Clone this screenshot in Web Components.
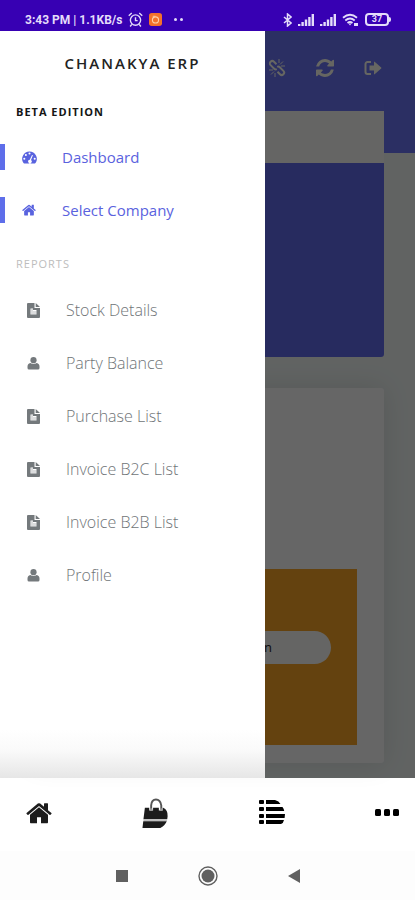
<!DOCTYPE html>
<html lang="en">
<head>
<meta charset="utf-8">
<meta name="viewport" content="width=device-width, initial-scale=1">
<title>Chanakya ERP</title>
<style>
  html, body { margin: 0; height: 100%; }
  body { font-family: "Open Sans", Lato, sans-serif; background: #fff; }
</style>
</head>
<body>
<erp-app></erp-app>
<script>
const FA_HOME = '<path d="M1472 992v480q0 26-19 45t-45 19h-384v-384h-256v384h-384q-26 0-45-19t-19-45v-480q0-1 .5-3t.5-3l575-474 575 474q1 2 1 6zm223-69l-62 74q-8 9-21 11h-3q-13 0-21-7l-692-577-692 577q-12 8-24 7-13-2-21-11l-62-74q-8-10-7-23.5t11-21.5l719-599q32-26 76-26t76 26l244 204v-195q0-14 9-23t23-9h192q14 0 23 9t9 23v408l219 182q10 8 11 21.5t-7 23.5z"/>';
const ICONS = {
  home: ['64 180 1664 1400', FA_HOME],
  refresh: ['128 128 1536 1536', '<path d="M1639 1056q0 5-1 7-64 268-268 434.5t-478 166.5q-146 0-282.5-55t-243.5-157l-129 129q-19 19-45 19t-45-19-19-45v-448q0-26 19-45t45-19h448q26 0 45 19t19 45-19 45l-137 137q71 66 161 102t187 36q134 0 250-65t186-179q11-17 53-117 8-23 30-23h192q13 0 22.5 9.5t9.5 22.5zm25-800v448q0 26-19 45t-45 19h-448q-26 0-45-19t-19-45 19-45l138-138q-148-137-349-137-134 0-250 65t-186 179q-11 17-53 117-8 23-30 23h-199q-13 0-22.5-9.5t-9.5-22.5v-7q65-268 270-434.5t480-166.5q146 0 284 55.5t245 156.5l130-129q19-19 45-19t45 19 19 45z"/>'],
  unlink: ['0 0 18 18', '<g fill="none" stroke="currentColor" stroke-width="2" stroke-linejoin="round"><path d="M8.5 5.2 6 2.7a2.4 2.4 0 0 0-3.4 3.4l3.6 3.6a2.4 2.4 0 0 0 2.6.5"/><path d="M9.5 12.8l2.5 2.5a2.4 2.4 0 0 0 3.4-3.4l-3.6-3.6a2.4 2.4 0 0 0-2.6-.5"/></g><path d="M12 5.5 15 2.500M13 7h4M11 4V0M6 12.500l-3 3M5 11H1M7 14v4" stroke="currentColor" stroke-width="1"/>'],
  signout: ['0 0 18 16', '<path d="M7 2H3.500A2 2 0 0 0 1.500 4v8a2 2 0 0 0 2 2H7" fill="none" stroke="currentColor" stroke-width="2"/><path d="M5.500 5.500H10V2.200q0-1 .9-.3l6.300 5.600q.5.500 0 1l-6.300 5.600q-.9.700-.9-.3v-3.300H5.500z"/>'],
  gauge: ['0 0 16 14', '<path fill-rule="evenodd" d="M8 .5a8 8 0 0 0-6.500 12.500q.3.500.8.500h11.400q.5 0 .8-.5A8 8 0 0 0 8 .5zM8 1.700a1.100 1.100 0 1 1 0 2.200 1.100 1.100 0 0 1 0-2.200zM4.100 3.300a1.100 1.100 0 1 1 0 2.200 1.100 1.100 0 0 1 0-2.200zM2.400 7.300a1.100 1.100 0 1 1 0 2.200 1.100 1.100 0 0 1 0-2.200zM13.600 7.300a1.100 1.100 0 1 1 0 2.200 1.100 1.100 0 0 1 0-2.200zM10.700 4.200l1 .4-2.100 5.200a1.900 1.900 0 1 1-1.300-.4z"/>'],
  file: ['0 0 13 15', '<path fill-rule="evenodd" d="M0 1q0-1 1-1h6.500v5H13v9q0 1-1 1H1q-1 0-1-1zM3.500 5.500v6h6V7H6V5.500z"/><path d="M8.700 0 13 4H8.700z"/><path d="M4 6h2v2h3.500v3.500H4z" opacity=".25"/>'],
  user: ['0 0 12 13', '<circle cx="6" cy="3.200" r="3.100"/><path d="M0 11V9.500Q0 6.500 2.800 6q3.200 1.800 6.400 0Q12 6.500 12 9.500V11q0 1.500-1.500 1.500h-9Q0 12.500 0 11z"/>'],
  bag: ['0 0 27 31', '<path d="M3 10h19q5 2 4.600 9l-.4 3H1.500zM1.300 24h24.400q-2 5-6.700 7H.5z"/><path d="M9.500 13V7.500Q10 1.500 14.500 1.500T19.500 7.500V13" fill="none" stroke="#fff" stroke-width="4"/><path d="M9.500 12V7.500Q10 1.500 14.500 1.500T20 7.500V12" fill="none" stroke="#555" stroke-width="2"/><circle cx="9.500" cy="12" r="1.500" fill="#999"/><circle cx="20" cy="12" r="1.500" fill="#999"/><path d="M1.500 23h24.500" stroke="#bbb" stroke-width="1.500"/>'],
  list: ['0 0 26 25', '<rect y="0" x="0" width="5" height="4" rx="1"/><rect y="7" width="5" height="4" rx="1"/><rect y="14" width="5" height="4" rx="1"/><rect y="20" width="5" height="4" rx="1"/><path d="M7 0h9q4 1 5.500 4H7zM7 7h16.500q1.500 2 1.700 4H7zM7 14h19l-.4 4H7zM7 20h18q-.5 3-3 4H7z"/>'],
  more: ['0 0 24 7', '<rect width="6" height="7" rx="1.500"/><rect x="9" width="6" height="7" rx="1.500"/><rect x="18" width="6" height="7" rx="1.500"/>'],
  alarm: ['0 0 14 14', '<g fill="none" stroke="currentColor" stroke-width="1.300"><circle cx="7" cy="7.500" r="4.800"/><path d="M.7 3.500 3.500 1M13.300 3.500 10.500 1M7 5v3h2M3.500 11.500 2 13.500M10.500 11.500l1.500 2"/></g>'],
  app: ['0 0 14 14', '<rect width="14" height="14" rx="3" fill="#f4712b"/><circle cx="7" cy="7.500" r="3.300" fill="none" stroke="#ffd0a8" stroke-width="1.200"/><path d="M4 3.500h3" stroke="#ffd0a8"/>'],
  bluetooth: ['0 0 9 14', '<path d="M1 4l7 6-3.500 3V1L8 4l-7 6" fill="none" stroke="currentColor" stroke-width="1.500"/>'],
  signal: ['0 0 16 12', '<path d="M0 10h2.400v2H0zM3.400 8h2.400v4H3.400zM6.800 5.500h2.400V12H6.800zM10.200 3h2.400v9h-2.400zM13.600 0H16v12h-2.400z"/>'],
  wifi: ['0 0 17 14', '<g fill="none" stroke="currentColor" stroke-width="1.800"><path d="M1 4.800q7-6 14 0M3.300 7.500q4.700-4 9.400 0M5.500 10q2.500-2 5 0"/></g><path d="M6.500 10.500h3L8 12.500zM12 10h4v3h-4z"/>'],
  square: ['0 0 12 12', '<rect width="12" height="12"/>'],
  circle: ['0 0 20 20', '<circle cx="10" cy="10" r="9" fill="none" stroke="currentColor" stroke-width="1.400"/><circle cx="10" cy="10" r="6.500"/>'],
  back: ['0 0 12 14', '<path d="M12 0v14L0 7z"/>']
};

function define(name, html, setup) {
  const template = document.createElement('template');
  template.innerHTML = html;
  customElements.define(name, class extends HTMLElement {
    connectedCallback() {
      if (this.shadowRoot) return;
      this.attachShadow({ mode: 'open' }).append(template.content.cloneNode(true));
      if (setup) setup(this, this.shadowRoot);
    }
  });
}

define('erp-icon', `
  <style>
    :host { display: inline-flex; flex: none; }
    svg { display: block; fill: currentColor; }
  </style>
  <svg aria-hidden="true"></svg>`, (el, root) => {
  const [box, body] = ICONS[el.getAttribute('name')];
  const svg = root.querySelector('svg');
  svg.setAttribute('viewBox', box);
  svg.setAttribute('width', el.getAttribute('w'));
  svg.setAttribute('height', el.getAttribute('h'));
  svg.innerHTML = body;
});

define('status-bar', `
  <style>
    :host { display: flex; justify-content: space-between; align-items: center; box-sizing: border-box;
      height: 31px; padding: 8px 25px 0; background: #3700b3; color: #e4dcfa;
      font: 700 12px/16px Roboto, sans-serif; }
    div { display: flex; align-items: center; gap: 6px; white-space: nowrap; }
    .dots { display: flex; gap: 3px; margin-left: 6px; }
    .dots i { width: 3px; height: 3px; border-radius: 50%; background: currentColor; }
    .battery { position: relative; box-sizing: border-box; width: 24px; height: 13px; border: 2px solid currentColor;
      border-radius: 4px; font-size: 9px; line-height: 9px; text-align: center; display: block; margin-right: 1px; }
    .battery::after { content: ""; position: absolute; right: -4px; top: 2px; width: 2px; height: 5px;
      border-radius: 0 2px 2px 0; background: currentColor; }
  </style>
  <div><span>3:43 PM | 1.1KB/s</span><erp-icon name="alarm" w="15" h="15"></erp-icon>
    <erp-icon name="app" w="13" h="13"></erp-icon><span class="dots"><i></i><i></i></span></div>
  <div><erp-icon name="bluetooth" w="9" h="14"></erp-icon><erp-icon name="signal" w="16" h="12"></erp-icon>
    <erp-icon name="signal" w="16" h="12"></erp-icon><erp-icon name="wifi" w="17" h="14"></erp-icon>
    <span class="battery">37</span></div>`);

define('drawer-link', `
  <style>
    :host { display: block; }
    a { display: flex; align-items: center; box-sizing: border-box; height: 26px; padding-left: 27px;
      color: #6f7477; text-decoration: none; font-size: 16px; line-height: 20px; font-weight: 300; }
    .icon { width: 39px; display: flex; color: #74797c; }
    :host([active]) a { color: #5a62de; border-left: 5px solid #5e6eea; padding-left: 17px; font-weight: 400; font-size: 15px; }
    :host([active]) .icon { width: 40px; color: #5963df; }
    slot { display: block; }
  </style>
  <a href="#"><span class="icon"></span><slot></slot></a>`, (el, root) => {
  const icon = document.createElement('erp-icon');
  for (const key of ['w', 'h']) icon.setAttribute(key, el.getAttribute(key));
  icon.setAttribute('name', el.getAttribute('icon'));
  root.querySelector('.icon').append(icon);
});

define('side-drawer', `
  <style>
    :host { display: flex; flex-direction: column; box-sizing: border-box; width: 265px; max-width: 85%;
      background: linear-gradient(to top, #e6e6e6, #fafafa 28px, #fff 48px); }
    h1 { margin: 22px 0 0; font-size: 15px; line-height: 20px; font-weight: 600; letter-spacing: 2px;
      text-align: center; color: #222; }
    h2 { margin: 0 16px; font-size: 11px; line-height: 16px; font-weight: 700; letter-spacing: 1px; }
    .beta { margin-top: 31px; color: #151515; }
    .reports { color: #bdbdbd; font-weight: 400; }
    nav { display: flex; flex-direction: column; gap: 27px; }
    .top { padding: 24px 0 33px; }
    .list { padding-top: 25px; }
  </style>
  <h1>CHANAKYA ERP</h1>
  <h2 class="beta">BETA EDITION</h2>
  <nav class="top">
    <drawer-link active icon="gauge" w="15" h="13">Dashboard</drawer-link>
    <drawer-link active icon="home" w="14" h="12">Select Company</drawer-link>
  </nav>
  <h2 class="reports">REPORTS</h2>
  <nav class="list">
    <drawer-link icon="file" w="13" h="15">Stock Details</drawer-link>
    <drawer-link icon="user" w="13" h="13">Party Balance</drawer-link>
    <drawer-link icon="file" w="13" h="15">Purchase List</drawer-link>
    <drawer-link icon="file" w="13" h="15">Invoice B2C List</drawer-link>
    <drawer-link icon="file" w="13" h="15">Invoice B2B List</drawer-link>
    <drawer-link icon="user" w="13" h="13">Profile</drawer-link>
  </nav>`);

/* Home page shown beneath the drawer's scrim. */
define('home-page', `
  <style>
    :host { display: block; box-sizing: border-box; padding: 0 31px 15px;
      background: linear-gradient(#6b75f7 122px, #f2f8f6 122px); }
    header { display: flex; justify-content: flex-end; align-items: center; gap: 30px; height: 80px; box-sizing: border-box; padding: 0 2px 6px 0; }
    button { border: 0; padding: 0; background: none; color: #fffff4; display: flex; }
    .strip { height: 52px; background: #fdfdfa; }
    .hero { height: 194px; background: #636bee; border-radius: 0 0 3px 3px; }
    .card { margin-top: 31px; padding: 181px 27px 18px; background: #fff; border-radius: 3px; box-shadow: 0 0 28px #0000001c; }
    .promo { display: flex; align-items: center; justify-content: flex-end; height: 176px; box-sizing: border-box;
      padding: 0 26px 20px; background: #fba526; }
    .promo button { height: 33px; width: 200px; padding-right: 59px; border-radius: 17px; background: #fdfdfa;
      align-items: center; justify-content: flex-end; color: #222; font: 13px/20px "Open Sans", sans-serif; }
  </style>
  <header>
    <button aria-label="Disconnect"><erp-icon name="unlink" w="18" h="18"></erp-icon></button>
    <button aria-label="Refresh"><erp-icon name="refresh" w="18" h="18"></erp-icon></button>
    <button aria-label="Sign out"><erp-icon name="signout" w="18" h="16"></erp-icon></button>
  </header>
  <div class="strip"></div>
  <div class="hero"></div>
  <section class="card"><div class="promo"><button>n</button></div></section>`);

define('tab-bar', `
  <style>
    :host { display: block; background: #fff; }
    nav { display: flex; justify-content: space-between; align-items: center; box-sizing: border-box; height: 73px; padding: 0 16px 4px 26px; }
    a { color: #1c1c1c; display: flex; }
    a:nth-child(n+3) { color: #000; }
  </style>
  <nav>
    <a href="#" aria-label="Home"><erp-icon name="home" w="26" h="22"></erp-icon></a>
    <a href="#" aria-label="Shop"><erp-icon name="bag" w="26" h="30"></erp-icon></a>
    <a href="#" aria-label="List"><erp-icon name="list" w="26" h="25"></erp-icon></a>
    <a href="#" aria-label="More"><erp-icon name="more" w="24" h="7"></erp-icon></a>
  </nav>`);

define('system-nav', `
  <style>
    :host { display: flex; justify-content: center; align-items: center; gap: 70px; height: 50px; background: #fdfdfd; }
    button { border: 0; padding: 0; background: none; color: #606060; display: flex; }
  </style>
  <button aria-label="Recent apps"><erp-icon name="square" w="12" h="12"></erp-icon></button>
  <button aria-label="Home screen"><erp-icon name="circle" w="20" h="20"></erp-icon></button>
  <button aria-label="Back"><erp-icon name="back" w="12" h="14"></erp-icon></button>`);

define('erp-app', `
  <style>
    :host { display: flex; flex-direction: column; min-height: 100vh; }
    .stage { flex: 1; position: relative; display: grid; }
    .scrim { position: absolute; inset: 0; background: #00000099; }
    side-drawer { position: absolute; top: 0; bottom: 0; left: 0; }
  </style>
  <status-bar></status-bar>
  <div class="stage">
    <home-page></home-page>
    <div class="scrim"></div>
    <side-drawer></side-drawer>
  </div>
  <tab-bar></tab-bar>
  <system-nav></system-nav>`);
</script>
</body>
</html>
